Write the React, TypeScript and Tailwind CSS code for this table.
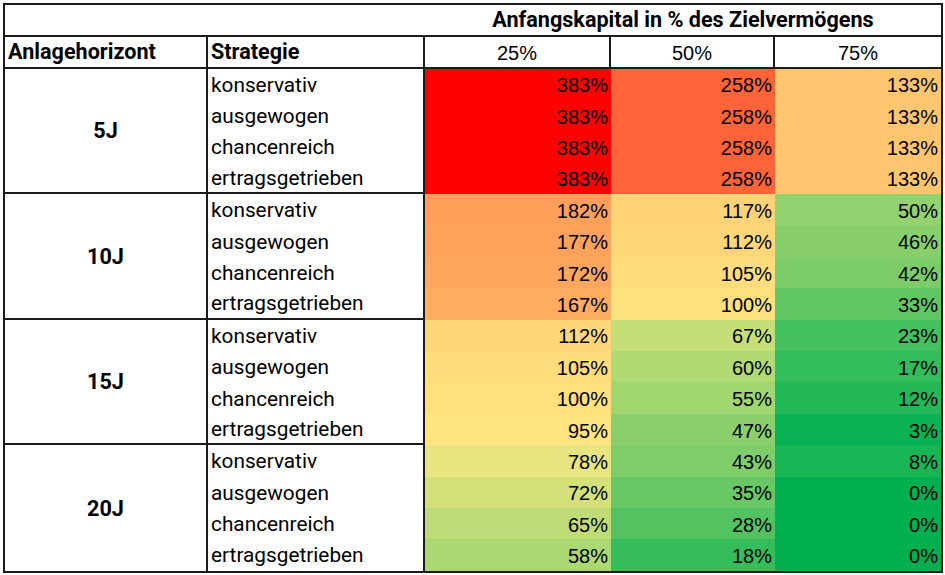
const STRATEGIES = ["konservativ", "ausgewogen", "chancenreich", "ertragsgetrieben"];

type Block = { horizon: string; rows: number[][] };

// columns: 25% / 50% / 75% Anfangskapital
const BLOCKS: Block[] = [
  { horizon: "5J", rows: [[383, 258, 133], [383, 258, 133], [383, 258, 133], [383, 258, 133]] },
  { horizon: "10J", rows: [[182, 117, 50], [177, 112, 46], [172, 105, 42], [167, 100, 33]] },
  { horizon: "15J", rows: [[112, 67, 23], [105, 60, 17], [100, 55, 12], [95, 47, 3]] },
  { horizon: "20J", rows: [[78, 43, 8], [72, 35, 0], [65, 28, 0], [58, 18, 0]] },
];

// Excel-style 3 colour scale: min green, median yellow, max red
const GREEN = [0, 176, 80];
const YELLOW = [255, 235, 132];
const RED = [255, 0, 0];

const all = BLOCKS.flatMap((b) => b.rows.flat()).sort((a, b) => a - b);
const MIN = all[0];
const MAX = all[all.length - 1];
const MID = (all[all.length / 2 - 1] + all[all.length / 2]) / 2;

function mix(a: number[], b: number[], t: number) {
  const c = a.map((v, i) => Math.round(v + (b[i] - v) * t));
  return `rgb(${c[0]}, ${c[1]}, ${c[2]})`;
}

function heat(v: number) {
  if (v >= MID) return mix(YELLOW, RED, (v - MID) / (MAX - MID));
  return mix(GREEN, YELLOW, (v - MIN) / (MID - MIN));
}

const LABEL = "font-['Roboto',sans-serif] text-[20.8px] text-black";
const BOLD = "font-['Roboto',sans-serif] text-[21.6px] font-bold text-black";
const NUM = "font-['Liberation_Sans',Arial,sans-serif] text-[20px] text-black";

export default function App() {
  return (
    <div className="w-[945px] h-[575px] bg-white pl-[3px] pt-[3px]">
      <div className="w-[940px] border-2 border-[#1c1c1c] grid grid-cols-[203px_217px_186px_164px_166px] grid-rows-[32px_31.5px_repeat(16,31.4px)]">
        {/* title row */}
        <div className="col-span-2 border-b-2 border-[#1c1c1c]" />
        <div className={`col-span-3 border-b-2 border-[#1c1c1c] flex items-center justify-center pt-[1px] ${BOLD}`}>
          Anfangskapital in % des Zielvermögens
        </div>

        {/* header row */}
        <div className={`border-b-2 border-r-2 border-[#1c1c1c] flex items-center pl-[3px] pt-[1px] ${BOLD}`}>
          Anlagehorizont
        </div>
        <div className={`border-b-2 border-r-2 border-[#1c1c1c] flex items-center pl-[3px] pt-[1px] ${BOLD}`}>
          Strategie
        </div>
        {["25%", "50%", "75%"].map((h, i) => (
          <div
            key={h}
            className={`border-b-2 border-[#1c1c1c] flex items-center justify-center pt-[2px] ${NUM} ${
              i < 2 ? "border-r-2" : ""
            }`}
          >
            {h}
          </div>
        ))}

        {BLOCKS.map((block, bi) => {
          const last = bi === BLOCKS.length - 1;
          return block.rows.map((vals, ri) => (
            <div key={`${bi}-${ri}`} className="contents">
              {ri === 0 && (
                <div
                  className={`row-span-4 border-r-2 border-[#1c1c1c] flex items-center justify-center pt-[2px] ${BOLD} ${
                    last ? "" : "border-b-2"
                  }`}
                >
                  {block.horizon}
                </div>
              )}
              <div
                className={`border-r-2 border-[#1c1c1c] flex items-center pl-[3px] pt-[2px] ${LABEL} ${
                  ri === 3 && !last ? "border-b-2" : ""
                }`}
              >
                {STRATEGIES[ri]}
              </div>
              {vals.map((v, ci) => (
                <div
                  key={ci}
                  className={`flex items-center justify-end pr-[3px] pt-[2px] ${NUM}`}
                  style={{ background: heat(v) }}
                >
                  {v}%
                </div>
              ))}
            </div>
          ));
        })}
      </div>
    </div>
  );
}
